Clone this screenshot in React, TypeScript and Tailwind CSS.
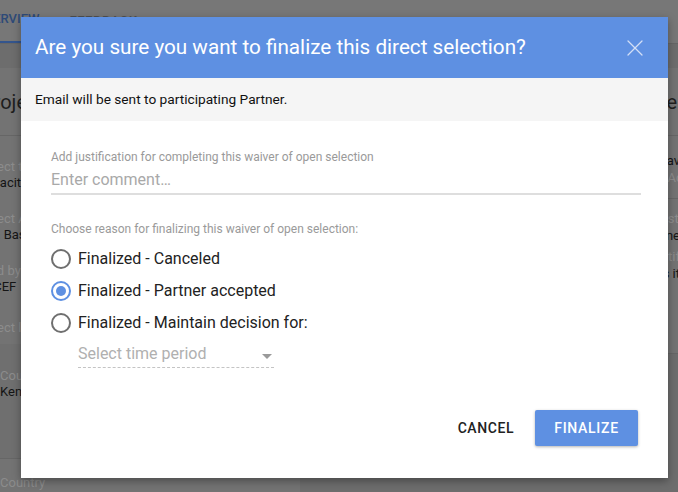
import { X } from "lucide-react";

const font = { fontFamily: "Roboto, 'Liberation Sans', sans-serif" };

const Radio = ({ checked, label }: { checked?: boolean; label: string }) => (
  <label className="flex h-[32px] items-center gap-[7px]">
    <span
      className={`flex h-[20px] w-[20px] items-center justify-center rounded-full border-2 ${
        checked ? "border-[#5e90e2]" : "border-[#6f6f6f]"
      }`}
    >
      {checked && <span className="h-[10px] w-[10px] rounded-full bg-[#5e90e2]" />}
    </span>
    <span className="text-[16px] text-[#222]">{label}</span>
  </label>
);

// page behind the dimmed overlay
const Backdrop = () => (
  <div className="flex h-[492px] w-[678px] flex-col overflow-hidden bg-[#6d6d6d]">
    <div className="flex h-[44px] shrink-0 items-end gap-[30px] border-b border-[#666] bg-[#777]">
      <div className="ml-[-24px] border-b-2 border-[#34558d] pb-[13px] text-[13px] font-medium text-[#2e4a78]">
        OVERVIEW
      </div>
      <div className="pb-[13px] text-[13px] font-medium tracking-[0.04em] text-[#505050]">FEEDBACK</div>
    </div>
    <div className="flex flex-1">
      <div className="mt-[24px] w-[300px] bg-[#737373]">
        <div className="ml-[-19px] flex h-[68px] items-center border-b border-[#666] text-[20px] text-[#1e1e1e]">
          Project details
        </div>
        <div className="flex flex-col text-[13px] leading-[16px]">
          <span className="ml-[-26px] mt-[23px] text-[#8c8c8c]">Project title</span>
          <span className="ml-[-23px] text-[#151515]">Capacity building</span>
          <span className="ml-[-26px] mt-[20px] text-[#8c8c8c]">Project Area</span>
          <span className="ml-[-34px] text-[#151515]">Africa Basin</span>
          <span className="ml-[-50px] mt-[20px] text-[#8c8c8c]">Managed by</span>
          <span className="ml-[-28px] text-[#151515]">UNICEF</span>
          <span className="ml-[-26px] mt-[25px] text-[#8c8c8c]">Project location</span>
        </div>
        <div className="mt-[8px] h-[115px] border-b border-[#666] bg-[#6f6f6f] pt-[24px] text-[13px] leading-[16px]">
          <div className="text-[#8c8c8c]">Country</div>
          <div className="text-[#151515]">Kenya</div>
        </div>
        <div className="pt-[14px] text-[13px] text-[#8c8c8c]">Country</div>
      </div>
      <div className="flex-1" />
      <div className="mt-[24px] flex w-[60px] flex-col">
        <div className="h-[286px] border-b border-[#666] bg-[#737373]">
          <div className="flex h-[68px] items-center justify-end border-b border-[#666] text-[20px] text-[#1e1e1e]">
            <span className="mr-[-4px]">Panel</span>
          </div>
          <div className="flex flex-col items-end text-[13px] leading-[17px]">
            <span className="mt-[16px] mr-[-2px] text-[#151515]">Nav</span>
            <span className="mr-[-9px] text-[#8c8c8c]">Act</span>
            <div className="mt-[12px] w-full border-t border-[#666]" />
            <span className="mt-[11px] mr-[-4px] text-[#8c8c8c]">Justi</span>
            <span className="mr-[-2px] text-[#151515]">None</span>
            <span className="mt-[4px] mr-[-2px] text-[#8c8c8c]">Justif</span>
            <span className="mr-[-2px] text-[#151515]">Yes it</span>
          </div>
        </div>
      </div>
    </div>
  </div>
);

export default function App() {
  return (
    <div className="relative h-[492px] w-[678px] overflow-hidden" style={font}>
      <Backdrop />
      <div className="absolute left-[21px] top-[17px] flex h-[461px] w-[647px] flex-col bg-white shadow-[0_3px_8px_rgba(0,0,0,0.35)]">
        <div className="flex h-[61px] shrink-0 items-center justify-between bg-[#5e90e2] pl-[14px] pr-[19px]">
          <h2 className="text-[20.7px] font-normal text-white">
            Are you sure you want to finalize this direct selection?
          </h2>
          <X className="h-[28px] w-[28px] text-[#d3dff6]" strokeWidth={1.1} />
        </div>
        <div className="flex h-[43px] shrink-0 items-center bg-[#f5f5f5] px-[14px] text-[13.7px] font-normal text-[#111]">
          Email will be sent to participating Partner.
        </div>
        <div className="flex flex-1 flex-col pl-[30px] pr-[27px] pt-[29px]">
          <div className="text-[12px] leading-[14px] text-[#9a9a9a]">
            Add justification for completing this waiver of open selection
          </div>
          <div className="mt-[6px] border-b-2 border-[#dedede] pb-[3px] text-[16px] leading-[20px] text-[#a9a9a9]">
            Enter comment…
          </div>
          <div className="mt-[27px] text-[12px] leading-[14px] text-[#9a9a9a]">
            Choose reason for finalizing this waiver of open selection:
          </div>
          <div className="mt-[7px] flex flex-col">
            <Radio label="Finalized - Canceled" />
            <Radio checked label="Finalized - Partner accepted" />
            <Radio label="Finalized - Maintain decision for:" />
          </div>
          <div className="ml-[27px] mt-[5px] flex w-[196px] items-center justify-between border-b border-dashed border-[#c4c4c4] pb-[3px]">
            <span className="text-[16px] leading-[20px] text-[#b0b0b0]">Select time period</span>
            <span className="mr-[2px] mt-[4px] h-0 w-0 border-x-[5px] border-t-[5px] border-x-transparent border-t-[#9a9a9a]" />
          </div>
          <div className="mt-auto mb-[32px] flex items-center justify-end gap-[21px] pr-[3px]">
            <button className="text-[14px] font-medium tracking-[0.04em] text-[#222]">CANCEL</button>
            <button className="h-[36px] w-[103px] rounded-[2px] bg-[#5e90e2] text-[14px] font-medium tracking-[0.05em] text-white shadow-[0_1px_3px_rgba(0,0,0,0.3)]">
              FINALIZE
            </button>
          </div>
        </div>
      </div>
    </div>
  );
}
